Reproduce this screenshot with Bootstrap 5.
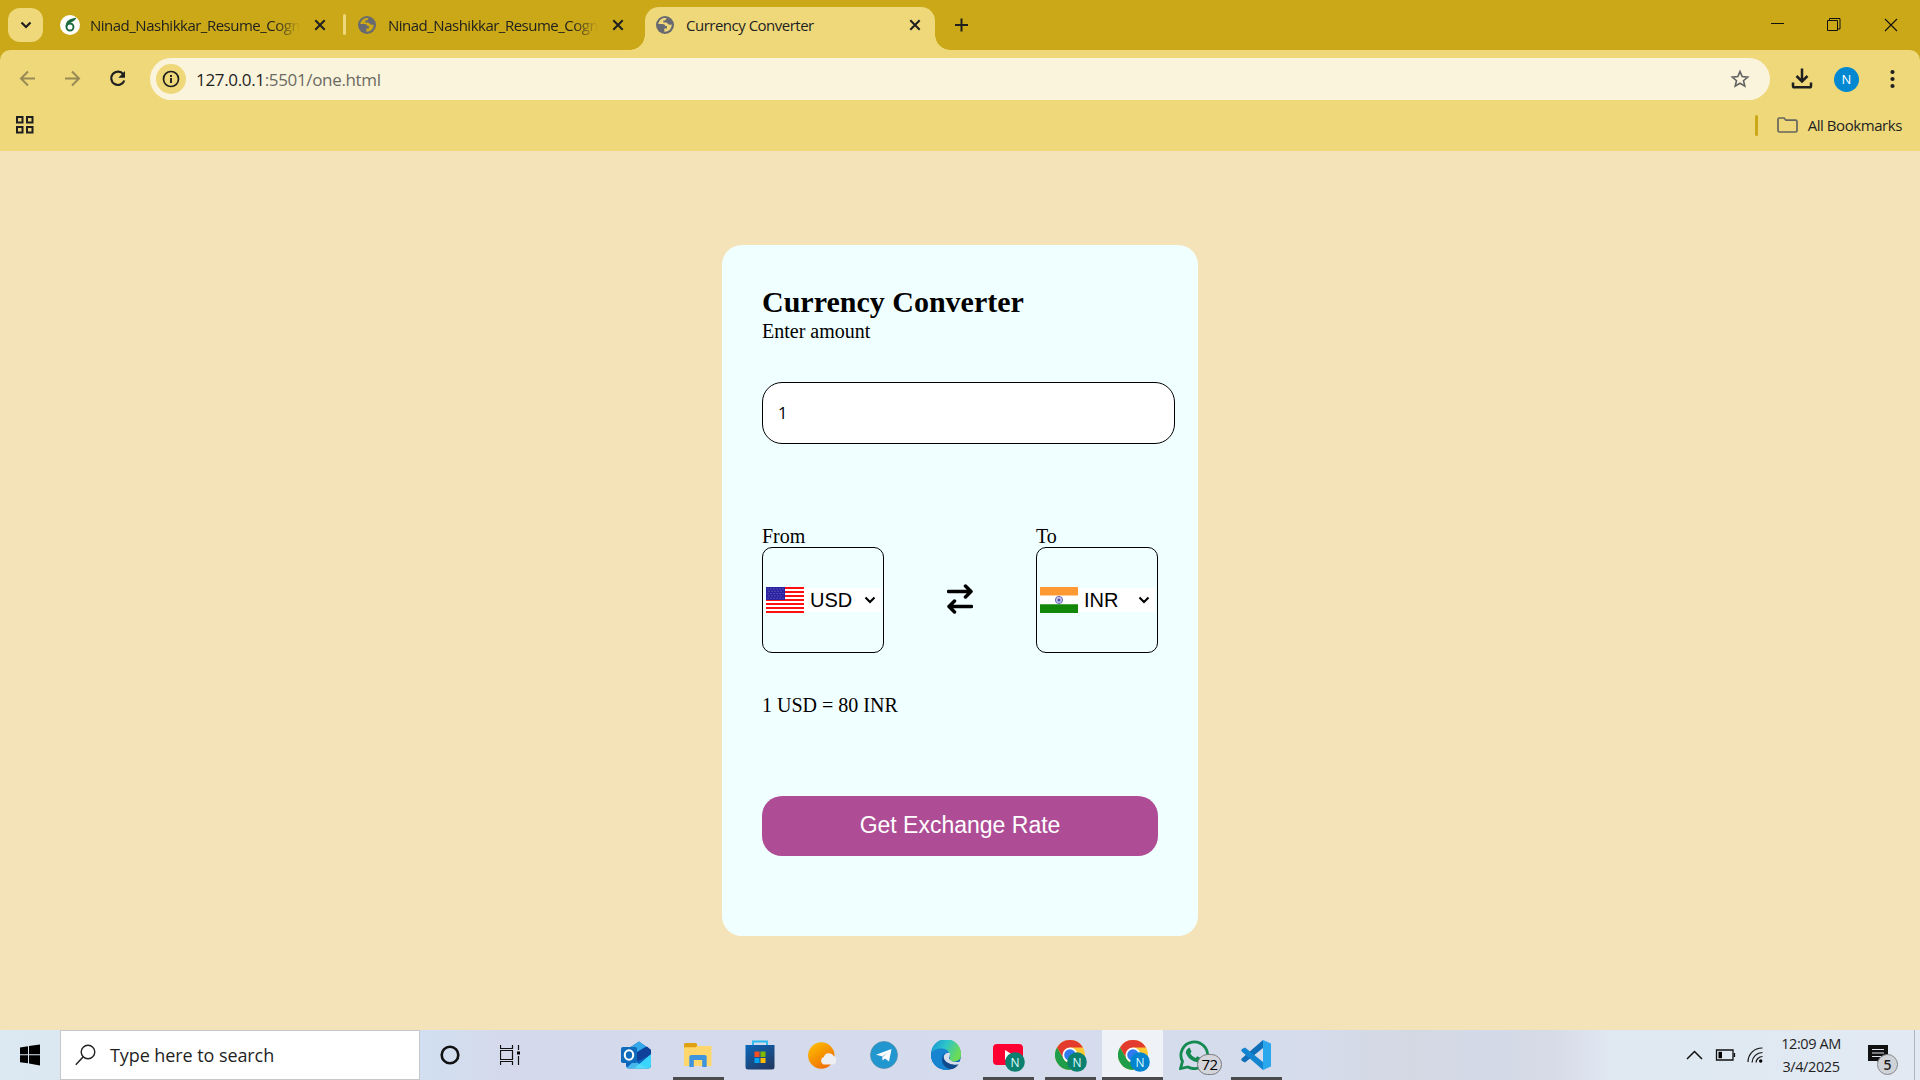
<!DOCTYPE html>
<html lang="en">
<head>
<meta charset="utf-8">
<title>Currency Converter</title>
<link href="https://cdn.jsdelivr.net/npm/bootstrap@5.3.0/dist/css/bootstrap.min.css" rel="stylesheet">
<style>
  body { width: 1920px; height: 1080px; overflow: hidden; background: #f4e3b9; color: #000; }
  svg { display: block; flex: none; }
  .ui-font { font-family: "Open Sans", "Noto Sans", sans-serif; color: #1f1f1f; white-space: nowrap; }

  /* tab strip */
  .tabstrip { height: 50px; background: #caa818; padding: 0 22px 0 8px; }
  .tab-menu { width: 35px; height: 34px; margin-top: 8px; border-radius: 12px; background: #eed87a; }
  .tab-item { height: 43px; margin-top: 7px; font-size: 15px; letter-spacing: -.5px; padding-bottom: 7px; }
  .tab-one { width: 300px; padding-left: 17px; padding-right: 17px; }
  .tab-two { width: 299px; padding-left: 12px; padding-right: 21px; --g: #caa818; }
  .tab-label { overflow: hidden; width: 210px; line-height: 24px; margin: -1px 0 0 12px; }
  .tab-one .tab-label { margin-left: 10px; }
  .tab-fade { -webkit-mask-image: linear-gradient(90deg, #000 88%, transparent 100%); mask-image: linear-gradient(90deg, #000 88%, transparent 100%); }
  .tab-sep { width: 3px; height: 21px; margin-top: 14px; border-radius: 2px; background: #eed87a; }
  .tab-live { --g: #eed87a; width: 290px; background: #eed87a; border-radius: 14px 14px 0 0; padding-left: 11px; padding-right: 14px; }
  .tab-live::before, .tab-live::after { content: ""; position: absolute; bottom: 0; width: 15px; height: 15px; }
  .tab-live::before { left: -15px; background: radial-gradient(circle at 0 0, transparent 14.5px, #eed87a 15px); }
  .tab-live::after { right: -15px; background: radial-gradient(circle at 100% 0, transparent 14.5px, #eed87a 15px); }

  /* toolbar and bookmarks */
  .toolbar-wrap { height: 101px; background: #caa818; }
  .toolbar { height: 101px; background: #eed87a; border-radius: 10px 10px 0 0; }
  .nav-line { height: 58px; padding: 0 18px; }
  .nav-icons { margin-right: 22px; }
  .omnibox { width: 1620px; height: 42px; border-radius: 21px; background: #fbf4dc; padding: 0 20px 0 6px; }
  .site-info { width: 30px; height: 30px; border-radius: 50%; background: #eed87a; }
  .address { font-size: 17px; letter-spacing: -.34px; line-height: 24px; margin-left: 10px; padding-top: 1px; }
  .address span { color: #6b6a63; }
  .download { margin: 0 21px; }
  .avatar-n { width: 25px; height: 25px; border-radius: 50%; background: #0288d1; color: #fff; font: 13px/25px "Open Sans", sans-serif; }
  .marks-line { height: 34px; padding: 0 18px 0 16px; }
  .marks-sep { width: 3px; height: 21px; border-radius: 2px; background: #caa818; }
  .marks-folder { margin: 0 10px 0 19px; }
  .marks-text { font-size: 15px; letter-spacing: -.43px; line-height: 20px; }

  /* converter */
  .page-area { height: 879px; padding-top: 94px; font-family: "Liberation Serif", "Times New Roman", serif; font-size: 20px; line-height: 23px; }
  .converter { width: 476px; height: 691px; padding: 40px; border-radius: 20px; background: #f0ffff; }
  .converter h2 { font-size: 30px; line-height: 34px; font-weight: 700; margin: 0; }
  .caption-line { line-height: 22px; padding-top: 1px; }
  .amount { width: 413px; height: 62px; border: 1px solid #000; border-radius: 20px; background: #fff; margin: 40px 0 80px; padding: 0 15px 2px; font: 16.5px "Open Sans", sans-serif; color: #000; outline: 0; }
  .pick { width: 122px; height: 106px; border: 1px solid #000; border-radius: 10px; padding-left: 3px; font-family: "Liberation Sans", Arial, sans-serif; }
  .pick-value { width: 77px; height: 24px; background: #fff; padding: 0 5px 0 6px; }
  .swap { padding-top: 20px; }
  .rate { margin: 40px 0 80px; }
  .go { height: 60px; border: 0; border-radius: 20px; padding: 0 0 1px; background: #ae4d96; color: #fff; font: 23px/27px "Liberation Sans", Arial, sans-serif; }

  /* taskbar */
  .taskbar { height: 50px; background: linear-gradient(90deg, #dde9f2 0, #dbe7f1 60px, #d1dff0 425px, #d4daeb 500px, #d5dcec 1290px, #d4d8e3 1410px, #d3d9e7 1490px, #d7dbe7 1555px, #e0e8f2 1610px, #dfe9f1 1690px, #e2e9f3 1920px); }
  .start { width: 60px; }
  .search-box { width: 360px; height: 50px; background: #fff; border: 1px solid #c6c8cb; padding-left: 14px; gap: 14px; font-size: 18px; letter-spacing: -.08px; }
  .cell-60 { width: 60px; }
  .apps { margin-left: 65px; }
  .app { width: 62px; height: 50px; }
  .app.running::after { content: ""; position: absolute; left: 6px; right: 5px; bottom: 0; height: 3px; background: #4b4b4d; }
  .app.current { background: #eff2f7 padding-box; border-left: 1px solid transparent; }
  .app.current::after { left: 0; right: 0; }
  .count { position: absolute; left: 34px; top: 24px; width: 25px; height: 21px; border: 1px solid #77797c; border-radius: 11px; background: #d3d5da; font-size: 15px; line-height: 19px; letter-spacing: -.5px; text-align: center; color: #000; }
  .tray { margin-right: 5px; border-right: 1px solid #aeb6c0; height: 50px; }
  .clock { width: 70px; font-size: 14.5px; line-height: 23px; letter-spacing: -.42px; margin-left: 12px; }
  .notes { width: 31px; height: 36px; margin: 0 15px 0 22px; padding-top: 8px; }
  .notes-count { position: absolute; left: 9px; top: 17px; width: 21px; height: 21px; border-radius: 50%; border: 1px solid #85888c; background: #cfd2d6; font-size: 14px; font-weight: 600; line-height: 19px; text-align: center; }
</style>
</head>
<body>
<svg width="0" height="0" class="position-absolute">
  <defs>
    <symbol id="cross" viewBox="0 0 12 12"><path d="M1.300 1.300l9.400 9.400M10.700 1.300L1.300 10.700" stroke="#1f1f1f" stroke-width="2" fill="none"/></symbol>
    <symbol id="globe" viewBox="0 0 18 18"><circle cx="9" cy="9" r="9" fill="#676a70"/><path d="M10.500 2.100 A7 7 0 0 0 2.100 8 H6.500 q2.500.2 2.800 2 h1.600 v2.600 H8.300 V15.800 A7 7 0 0 0 15.800 8.300 q-1.600 1-3 .2 t-2.300-1.900 H7.300 V4.400 h1.600 q1.400-.3 1.600-2.300z" fill="var(--g)"/></symbol>
    <symbol id="chrome" viewBox="0 0 30 30"><circle cx="15" cy="15" r="15" fill="#fcc934"/><path d="M2 7.500 A15 15 0 0 1 28 7.500 H15 L8.500 18.700z" fill="#e33b2e"/><path d="M2 7.500 L8.500 18.700 Q11 23 15 22.500 h4.300 L15 30 A15 15 0 0 1 2 7.500z" fill="#1e9e4a"/><circle cx="15" cy="15" r="7.500" fill="#fff"/><circle cx="15" cy="15" r="5.800" fill="#2f7cf0"/></symbol>
    <symbol id="chev" viewBox="0 0 12 8"><path d="M1.500 1.500L6 6l4.500-4.500" fill="none" stroke="#000" stroke-width="2.100"/></symbol>
  </defs>
</svg>

<header class="ui-font">
  <div class="tabstrip d-flex align-items-start">
    <div class="tab-menu d-flex align-items-center justify-content-center">
      <svg width="12" height="8"><path d="M1.500 1.500L6 6l4.500-4.500" fill="none" stroke="#1f1f1f" stroke-width="2.200"/></svg>
    </div>
    <div class="tab-item tab-one d-flex align-items-center">
      <svg width="20" height="20" viewBox="0 0 20 20"><circle cx="10" cy="10" r="10" fill="#fff"/><circle cx="10" cy="12" r="3.500" fill="none" stroke="#1b6b3c" stroke-width="1.900"/><path d="M6.300 11.500C6.300 7 9 4.500 14.800 3.800 13.500 6 11.500 6.300 8.500 7.800" fill="none" stroke="#1b6b3c" stroke-width="1.700"/></svg>
      <div class="tab-label tab-fade">Ninad_Nashikkar_Resume_Cogn</div>
      <svg width="12" height="12" class="ms-auto"><use href="#cross"/></svg>
    </div>
    <div class="tab-sep"></div>
    <div class="tab-item tab-two d-flex align-items-center">
      <svg width="18" height="18"><use href="#globe"/></svg>
      <div class="tab-label tab-fade">Ninad_Nashikkar_Resume_Cogn</div>
      <svg width="12" height="12" class="ms-auto"><use href="#cross"/></svg>
    </div>
    <div class="tab-item tab-live position-relative d-flex align-items-center">
      <svg width="18" height="18"><use href="#globe"/></svg>
      <div class="tab-label">Currency Converter</div>
      <svg width="12" height="12" class="ms-auto"><use href="#cross"/></svg>
    </div>
    <div class="tab-item d-flex align-items-center ps-3">
      <svg width="14" height="14" class="ms-1"><path d="M6.500 .5v13M0 7h13" stroke="#1f1f1f" stroke-width="2"/></svg>
    </div>
    <div class="tab-item d-flex align-items-center ms-auto">
      <svg width="127" height="14"><g fill="none" stroke="#111"><path d="M0 5.500h13M56.500 2.500h10v10h-10zM58.500 2V.500h10.500V11h-2"/><path d="M114 1l12 12M126 1L114 13" stroke-width="1.100"/></g></svg>
    </div>
  </div>

  <div class="toolbar-wrap">
    <div class="toolbar">
      <div class="nav-line d-flex align-items-center">
        <svg class="nav-icons" width="110" height="20" viewBox="0 0 110 20"><g fill="none" stroke="#978a55" stroke-width="2"><path d="M17 9.500H3.500M10 2.500l-7 7 7 7M47 9.500h13.500M54 2.500l7 7-7 7"/></g><path d="M105.300 5.200A6.700 6.700 0 1 0 106.300 11.500" fill="none" stroke="#1f1f1f" stroke-width="2.200"/><path d="M107 2v6.700h-6.700z" fill="#1f1f1f"/></svg>
        <div class="omnibox d-flex align-items-center">
          <div class="site-info d-flex align-items-center justify-content-center">
            <svg width="18" height="18"><circle cx="9" cy="9" r="7.500" fill="none" stroke="#1f1f1f" stroke-width="1.700"/><path d="M9 8v5M9 5v2" stroke="#1f1f1f" stroke-width="1.900"/></svg>
          </div>
          <div class="address">127.0.0.1<span>:5501/one.html</span></div>
          <svg class="ms-auto" width="20" height="20" viewBox="0 0 20 20"><path d="M10 2.600l2.200 5 5.500.5-4.200 3.600 1.300 5.400L10 14.200l-4.800 2.900 1.300-5.400L2.300 8.100l5.500-.5z" fill="none" stroke="#626262" stroke-width="1.600"/></svg>
        </div>
        <svg class="download" width="22" height="22" viewBox="0 0 22 22"><path d="M11 .5v12.500M5.500 8L11 13.500 16.500 8M2 14.500V18q0 1.300 1.300 1.300h15.400q1.300 0 1.300-1.300v-3.500" fill="none" stroke="#1f1f1f" stroke-width="2.500"/></svg>
        <div class="avatar-n text-center">N</div>
        <svg class="ms-auto" width="20" height="20"><g fill="#1f1f1f"><circle cx="10.500" cy="3" r="2.100"/><circle cx="10.500" cy="10" r="2.100"/><circle cx="10.500" cy="17" r="2.100"/></g></svg>
      </div>
      <div class="marks-line d-flex align-items-center">
        <svg width="18" height="18"><path d="M1 1h5.500v5.500H1zM11 1h5.500v5.500H11zM1 11h5.500v5.500H1zM11 11h5.500v5.500H11z" fill="none" stroke="#1f1f1f" stroke-width="2"/></svg>
        <div class="marks-sep ms-auto"></div>
        <svg class="marks-folder" width="21" height="16"><path d="M1 2.500q0-1.500 1.500-1.500H7l2 2.200h9.500q1.500 0 1.500 1.500v8.800q0 1.500-1.500 1.500h-16Q1 15 1 13.500z" fill="none" stroke="#66655f" stroke-width="1.700"/></svg>
        <div class="marks-text">All Bookmarks</div>
      </div>
    </div>
  </div>
</header>

<main class="page-area d-flex justify-content-center align-items-start">
  <form class="converter">
    <h2>Currency Converter</h2>
    <div class="caption-line">Enter amount</div>
    <input class="amount d-block" type="text" value="1">
    <div class="d-flex justify-content-between align-items-center">
      <div>
        <div class="caption-line">From</div>
        <div class="pick d-flex align-items-center">
          <svg width="38" height="26" viewBox="0 0 38 26"><path fill="#fff" d="M0 0h38v26H0z"/><path d="M0 1h38M0 5h38M0 9h38M0 13h38M0 17h38M0 21h38M0 25h38" stroke="#f11" stroke-width="2"/><path fill="#2a22a0" d="M0 0h19v13H0z"/><path d="M1.500 2h17M2.500 4.300h15M1.500 6.600h17M2.500 8.900h15M1.500 11.200h17" stroke="#8d88d0" stroke-width=".8" stroke-dasharray="1 2"/></svg>
          <div class="pick-value d-flex align-items-center justify-content-between">USD <svg width="12" height="8"><use href="#chev"/></svg></div>
        </div>
      </div>
      <div class="swap"><svg width="26" height="30" viewBox="0 0 26 30"><path d="M1.500 7.500H24M18.500 2l5.500 5.500-5.500 5.500M24.500 22.500H2M7.500 17L2 22.500 7.500 28" fill="none" stroke="#000" stroke-width="3.500" stroke-linecap="round" stroke-linejoin="round"/></svg></div>
      <div>
        <div class="caption-line">To</div>
        <div class="pick d-flex align-items-center">
          <svg width="38" height="26" viewBox="0 0 38 26"><path fill="#fff" d="M0 0h38v26H0z"/><path fill="#ff9933" d="M0 0h38v8.500H0z"/><path fill="#138808" d="M0 17.200h38V26H0z"/><circle cx="19" cy="13" r="3.600" fill="#c9c9ea" stroke="#5b5bb0" stroke-width=".9"/><circle cx="19" cy="13" r="1.500" fill="#4c4cb0"/></svg>
          <div class="pick-value d-flex align-items-center justify-content-between">INR <svg width="12" height="8"><use href="#chev"/></svg></div>
        </div>
      </div>
    </div>
    <div class="rate caption-line">1 USD = 80 INR</div>
    <button type="button" class="go w-100">Get Exchange Rate</button>
  </form>
</main>

<footer class="taskbar ui-font d-flex align-items-center">
  <div class="start d-flex justify-content-center">
    <svg width="20" height="22" viewBox="0 0 20 22"><path d="M0 3.500L8 2.300V10.300H0zM9 2.100L20 .500v9.800H9zM0 11.300h8v8L0 18.200zM9 11.300h11V21.500L9 19.600z" fill="#000"/></svg>
  </div>
  <div class="search-box d-flex align-items-center">
    <svg width="21" height="22" viewBox="0 0 21 22"><path d="M8.500 12.500L.8 20.800" stroke="#222" stroke-width="1.500"/><circle cx="13" cy="8" r="6.800" fill="none" stroke="#222" stroke-width="1.400"/></svg>
    <div>Type here to search</div>
  </div>
  <div class="cell-60 d-flex justify-content-center"><svg width="20" height="20"><circle cx="10" cy="10" r="8.300" fill="none" stroke="#111" stroke-width="2.600"/></svg></div>
  <div class="cell-60 d-flex justify-content-center"><svg width="20" height="20"><path d="M.5 0v3.500h12V0M.5 5.500h12v9H.5zM.5 20v-3.500h12V20M18.500 0v5M18.500 11v9" fill="none" stroke="#111" stroke-width="1.200"/><path d="M17 6.500h3v3h-3z"/></svg></div>

  <nav class="apps d-flex">
    <div class="app d-flex align-items-center justify-content-center">
      <svg width="31" height="28" viewBox="0 0 31 28"><path d="M5 9L18 .5 30 9v15q0 3.500-3.500 3.500H8Q5 27.500 5 24z" fill="#0b62bd"/><path d="M8 7.500L18 .5l7 5-13 8z" fill="#35a8e8"/><path d="M12 13.500L26 5.500l4 3.500v5L17 20z" fill="#10419a"/><path d="M13 27.500L30 13v11q0 3.500-3.500 3.500z" fill="#3bd5fb"/><path d="M5 27.500h22L13 20z" fill="#61dcff" opacity=".7"/><rect y="6" width="16" height="16" rx="1.800" fill="#0f6cbd"/><ellipse cx="8" cy="14" rx="4.200" ry="4.800" fill="none" stroke="#fff" stroke-width="2.100"/></svg>
    </div>
    <div class="app running position-relative d-flex align-items-center justify-content-center">
      <svg width="28" height="25" viewBox="0 0 28 25"><path d="M0 3h27.500v20H0z" fill="#ffd66b"/><path d="M0 1.500Q0 0 1.500 0H12l1.500 2L12 4.300H0z" fill="#dfa111"/><path d="M5.300 24V14q0-2 2-2h13.400q2 0 2 2v10h-4.500v-7H9.800v7z" fill="#3d94dc"/></svg>
    </div>
    <div class="app d-flex align-items-center justify-content-center">
      <svg width="30" height="30" viewBox="0 0 30 30"><defs><linearGradient id="st" x2=".7" y2="1"><stop stop-color="#0a68ba"/><stop offset="1" stop-color="#213a66"/></linearGradient></defs><path d="M8 6V1.500h14V6" fill="none" stroke="#27baf0" stroke-width="1.800"/><path d="M.5 5H29.500V27q0 2.500-2.500 2.500H3Q.5 29.500.5 27z" fill="url(#st)"/><path d="M9.500 11.500H14.500V17H9.500z" fill="#f25022"/><path d="M15.500 11.500H20.500V17H15.500z" fill="#7fba00"/><path d="M9.500 18H14.500v5H9.500z" fill="#00a4ef"/><path d="M15.500 18H20.500v5H15.500z" fill="#ffb900"/></svg>
    </div>
    <div class="app d-flex align-items-center justify-content-center">
      <svg width="28" height="27" viewBox="0 0 28 27"><defs><linearGradient id="sun" x2=".7" y2="1"><stop stop-color="#ffc400"/><stop offset="1" stop-color="#f06c00"/></linearGradient></defs><circle cx="13.300" cy="13.500" r="13.200" fill="url(#sun)"/><path d="M15.500 22.500a4 4 0 0 1 .3-7.500 5.500 5.500 0 0 1 10-1 4.400 4.400 0 0 1-1 8.500z" fill="#edeff3"/></svg>
    </div>
    <div class="app d-flex align-items-center justify-content-center">
      <svg width="28" height="28" viewBox="0 0 28 28"><circle cx="14" cy="14" r="13.500" fill="#2196cf" stroke="#5590ad" stroke-width=".8"/><path d="M6 13.800L21.500 8 19 20.500l-4-3-2.300 2-.7-4.300z" fill="#fff"/><path d="M12 15.500l6-4.500-5 5.200-.4 2.700z" fill="#9ccbe5"/></svg>
    </div>
    <div class="app d-flex align-items-center justify-content-center">
      <svg width="30" height="30" viewBox="0 0 30 30"><defs><linearGradient id="ed" y2=".4"><stop stop-color="#168fd4"/><stop offset=".5" stop-color="#2cc3cc"/><stop offset="1" stop-color="#6bdb57"/></linearGradient></defs><circle cx="15" cy="15" r="15" fill="#0d66b8"/><path d="M0 13A15 15 0 0 1 30 15c0 6-5.500 7-9 6.500-4-.5-2-2-2-5C19 9 8 6 0 13z" fill="url(#ed)"/><path d="M0 14C4 7 16 7 18 13c-5-1-8 2-7 7 1 4 5 8 9 9A15 15 0 0 1 0 14z" fill="#1684d0"/><path d="M14 15c-2 5 3 11 14 7q1 0 0 1.500-3 5-8 5.800C13 28 8 21 14 15z" fill="#114a8b"/><path d="M13 15.500q1.500-3.500 6-2.500 0 3-1 5.500 2 4 9 3.500h3v1.500q-8 3-14.500-1.500Q12 19 13 15.500z" fill="#d7deec"/></svg>
    </div>
    <div class="app running position-relative d-flex align-items-center justify-content-center">
      <svg width="36" height="34" viewBox="-1 0 36 34"><rect x="2" y="6" width="30" height="21" rx="4" fill="#ff0033"/><path d="M14 12l8 5-8 5z" fill="#fff"/><circle cx="24" cy="24" r="9.800" fill="#0b806f"/><text x="24" y="28.500" font-size="12" text-anchor="middle" fill="#dff">N</text></svg>
    </div>
    <div class="app running position-relative d-flex align-items-center justify-content-center">
      <svg width="36" height="34" viewBox="-1 0 36 34"><use href="#chrome" x="2" y="2" width="30" height="30"/><circle cx="24" cy="24" r="9.800" fill="#0b806f"/><text x="24" y="28.500" font-size="12" text-anchor="middle" fill="#dff">N</text></svg>
    </div>
    <div class="app running current position-relative d-flex align-items-center justify-content-center">
      <svg width="36" height="34" viewBox="-1 0 36 34"><use href="#chrome" x="2" y="2" width="30" height="30"/><circle cx="24" cy="24" r="9.800" fill="#0284cf"/><text x="24" y="28.500" font-size="12" text-anchor="middle" fill="#dff">N</text></svg>
    </div>
    <div class="app position-relative d-flex align-items-center justify-content-center">
      <svg width="30" height="30" viewBox="0 0 30 30"><path d="M1.500 28.500l2-7A13.300 13.300 0 1 1 9 27z" fill="none" stroke="#148a51" stroke-width="2.800"/><path d="M10.500 7.500l2 4-1.200 2q2 3.500 5.200 4.500l1.800-1.700 4 2q0 3.500-4 4-8-1-11.500-9.300Q7 9 10.500 7.500z" fill="#148a51"/></svg>
      <div class="count">72</div>
    </div>
    <div class="app running position-relative d-flex align-items-center justify-content-center">
      <svg width="30" height="30" viewBox="0 0 30 30"><path d="M22 0L30 3.500v23L22 30z" fill="#2ba7ee"/><path d="M22 0v8L4 22.500 1 21q-1.500-1.500 0-2.700z" fill="#0f6fb8"/><path d="M22 30v-8L4 7.500 1 9q-1.500 1.500 0 2.700z" fill="#1385d0"/></svg>
    </div>
  </nav>

  <div class="tray ms-auto d-flex align-items-center">
    <svg width="78" height="20" viewBox="0 0 78 20"><g fill="none" stroke="#111" stroke-width="1.500"><path d="M1 14L8.500 6.500 16 14"/><path d="M30.500 5H47v10H30.500zM48.500 8v4" stroke-width="1.300"/><path d="M62 17A14 14 0 0 1 76.500 3M66 17.500A10.500 10.500 0 0 1 76.500 7.500M70 17.500A6.500 6.500 0 0 1 76.500 11.500" stroke-width="1.200"/></g><path d="M32.500 6.800H36v6.400h-3.500z"/><circle cx="74.700" cy="16" r="1.700"/></svg>
    <div class="clock text-center">12:09 AM<br>3/4/2025</div>
    <div class="notes position-relative">
      <svg width="20" height="20"><path d="M0 0h20v16H13v4l-4-4H0z" fill="#111"/><path d="M4 4.500h12M4 8h12M4 11.500h9" stroke="#dfe6ef" stroke-width="1.200"/></svg>
      <div class="notes-count">5</div>
    </div>
  </div>
</footer>
<script src="https://cdn.jsdelivr.net/npm/bootstrap@5.3.0/dist/js/bootstrap.bundle.min.js"></script>
</body>
</html>
